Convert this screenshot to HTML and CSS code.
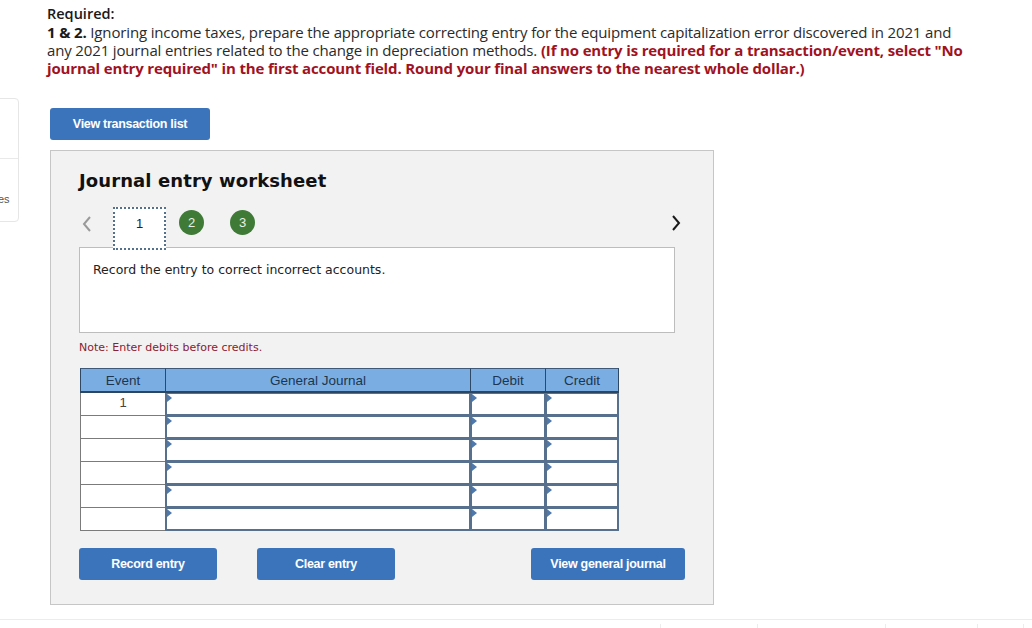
FILE: index.html
```html
<!DOCTYPE html>
<html>
<head>
<meta charset="utf-8">
<link rel="stylesheet" href="styles.css">
</head>
<body>
<div class="side-card">
  <div class="side-top"></div>
  <div class="side-bottom"><span class="side-text">es</span></div>
</div>
<div class="main">
  <div class="required">
    <div class="req-title">Required:</div>
    <p class="req-text"><b>1 &amp; 2.</b> Ignoring income taxes, prepare the appropriate correcting entry for the equipment capitalization error discovered in 2021 and any 2021 journal entries related to the change in depreciation methods. <span class="red">(If no entry is required for a transaction/event, select "No journal entry required" in the first account field. Round your final answers to the nearest whole dollar.)</span></p>
  </div>
  <button class="btn btn-list">View transaction list</button>
  <div class="panel">
    <h2 class="title">Journal entry worksheet</h2>
    <div class="tabs">
      <span class="arrow left"><svg width="12" height="18" viewBox="0 0 12 18"><path d="M9 2 L3 9 L9 16" fill="none" stroke="#9a9a9a" stroke-width="2"/></svg></span>
      <span class="tab active">1</span>
      <span class="dot">2</span>
      <span class="dot">3</span>
      <span class="spacer"></span>
      <span class="arrow right"><svg width="12" height="18" viewBox="0 0 12 18"><path d="M3 2 L9 9 L3 16" fill="none" stroke="#1a1a1a" stroke-width="2"/></svg></span>
    </div>
    <div class="instr">Record the entry to correct incorrect accounts.</div>
    <div class="note">Note: Enter debits before credits.</div>
    <div class="journal">
      <div class="th">Event</div><div class="th">General Journal</div><div class="th">Debit</div><div class="th last">Credit</div>
      <div class="ev">1</div><div class="in"><i></i></div><div class="in"><i></i></div><div class="in"><i></i></div>
      <div class="ev"></div><div class="in"><i></i></div><div class="in"><i></i></div><div class="in"><i></i></div>
      <div class="ev"></div><div class="in"><i></i></div><div class="in"><i></i></div><div class="in"><i></i></div>
      <div class="ev"></div><div class="in"><i></i></div><div class="in"><i></i></div><div class="in"><i></i></div>
      <div class="ev"></div><div class="in"><i></i></div><div class="in"><i></i></div><div class="in"><i></i></div>
      <div class="ev"></div><div class="in"><i></i></div><div class="in"><i></i></div><div class="in"><i></i></div>
    </div>
    <div class="actions">
      <button class="btn btn-rec">Record entry</button>
      <button class="btn btn-clr">Clear entry</button>
      <span class="spacer"></span>
      <button class="btn btn-view">View general journal</button>
    </div>
  </div>
</div>
<div class="footer">
  <span class="f1"></span><span class="f2"></span><span class="f3"></span><span class="f4"></span><span class="f5"></span>
</div>
</body>
</html>
```
FILE: styles.css
```css
html, body { margin: 0; padding: 0; background: #fff; }
body { width: 1032px; height: 628px; overflow: hidden; position: relative; font-family: "Open Sans", "Liberation Sans", sans-serif; }

.side-card { position: absolute; left: -10px; top: 98px; width: 27px; height: 122px; border: 1px solid #e6e6e6; border-radius: 0 4px 4px 0; }
.side-top { height: 59px; border-bottom: 1px solid #e9e9e9; }
.side-text { position: absolute; left: 7px; top: 94px; font-size: 11px; color: #555; font-family: "Liberation Sans", sans-serif; }

.main { padding: 5px 0 0 47px; }
.req-title { font-family: "Open Sans", sans-serif; font-weight: 600; font-size: 14.5px; line-height: 18px; color: #1a1a1a; }
.req-text { margin: 0; width: 922px; font-size: 15px; line-height: 18px; color: #2b2b2b; letter-spacing: -0.15px; }
.req-text b { font-weight: 700; color: #1a1a1a; }
.red { color: #a1121f; font-weight: 700; }

.btn { border: none; border-radius: 3px; background: #3b74bb; color: #fff; font-family: "Liberation Sans", Arial, sans-serif; font-weight: 700; font-size: 12.5px; height: 32px; padding: 0; cursor: pointer; letter-spacing: -0.3px; }
.btn-list { margin: 31px 0 0 3px; width: 160px; display: block; }

.panel { margin: 10px 0 0 3px; width: 664px; height: 455px; box-sizing: border-box; background: #f2f2f2; border: 1px solid #c6c6c6; padding: 0 0 0 28px; }
.title { margin: 19px 0 0 0; font-family: "DejaVu Sans", Verdana, sans-serif; font-weight: 700; font-size: 18px; line-height: 22px; color: #111; letter-spacing: 0.1px; }

.tabs { display: flex; align-items: center; margin-top: 15px; height: 30px; width: 612px; }
.arrow { display: flex; width: 12px; height: 18px; margin-top: 3px; }
.arrow.left { margin-left: 2px; }
.tab { box-sizing: border-box; width: 53px; height: 43px; margin-left: 20px; border: 2px dotted #55708f; background: #fff; align-self: flex-start; padding-top: 7px; text-align: center; font-family: "Liberation Sans", Arial, sans-serif; font-size: 13px; line-height: 16px; color: #222; position: relative; z-index: 1; }
.dot { width: 25px; height: 25px; border-radius: 50%; background: #3f7a37; color: #e8f0e6; display: flex; align-items: center; justify-content: center; font-family: "Liberation Sans", Arial, sans-serif; font-size: 13px; margin-left: 13px; margin-top: 1px; }
.dot + .dot { margin-left: 26px; }
.spacer { flex: 1; }
.arrow.right { margin-right: 9px; margin-top: 1px; }

.instr { box-sizing: border-box; width: 596px; height: 86px; margin-top: 10px; background: #fff; border: 1px solid #bdbdbd; padding: 14px 0 0 13px; font-family: "DejaVu Sans", Verdana, sans-serif; font-size: 12.5px; color: #222; }
.note { margin-top: 8px; font-family: "DejaVu Sans", Verdana, sans-serif; font-size: 11px; color: #8a2030; line-height: 14px; }

.journal { margin-top: 13px; margin-left: 1px; display: grid; grid-template-columns: 85px 305px 75px 74px; grid-auto-rows: 23px; grid-template-rows: 25px; width: 539px; }
.th { box-sizing: border-box; background: #7aaee3; border-top: 1px solid #3e5a78; border-left: 1px solid #2f4866; border-bottom: 2px solid #2c4560; font-family: "Liberation Sans", Arial, sans-serif; font-size: 13.5px; color: #1d3550; display: flex; align-items: center; justify-content: center; padding-bottom: 0; }
.th.last { border-right: 1px solid #2f4866; }
.ev { box-sizing: border-box; background: #fff; border-left: 1px solid #7b7b7b; border-bottom: 1px solid #7b7b7b; text-align: center; font-family: "Liberation Sans", Arial, sans-serif; font-size: 13px; color: #444; line-height: 20px; }
.in { box-sizing: border-box; background: #fff; border: 1px solid #56708e; border-width: 1px 1px 2px 2px; position: relative; }
.in:nth-child(4n) { border-right-width: 2px; }
.in i { position: absolute; left: 0; top: 0; width: 0; height: 0; border-top: 4px solid transparent; border-bottom: 4px solid transparent; border-left: 5px solid #4e79ad; }

.actions { display: flex; align-items: center; width: 606px; margin-top: 17px; }
.btn-rec { width: 138px; }
.btn-clr { width: 138px; margin-left: 40px; }
.btn-view { width: 154px; }

.footer { position: absolute; left: 0; top: 619px; width: 1032px; height: 9px; border-top: 1px solid #ececec; }
.footer span { position: absolute; top: 4px; height: 6px; border-left: 1px solid #ececec; }
.f1 { left: 660px; } .f2 { left: 757px; } .f3 { left: 885px; } .f4 { left: 977px; } .f5 { left: 1023px; }
```
